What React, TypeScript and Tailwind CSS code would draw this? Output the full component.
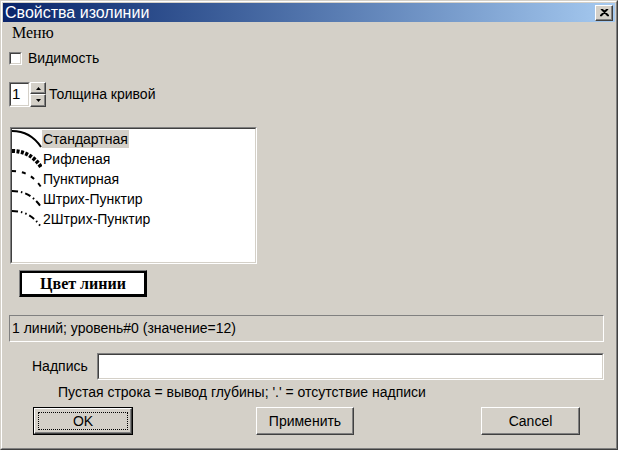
import React from 'react';

const sans = { fontFamily: '"Liberation Sans", Arial, sans-serif' };

// Стили линий для списка
const lineStyles = [
  { name: 'Стандартная', dash: '', width: 2 },
  { name: 'Рифленая', dash: '3 1.5', width: 4 },
  { name: 'Пунктирная', dash: '4 6', width: 2 },
  { name: 'Штрих-Пунктир', dash: '6 3 1.5 3', width: 2 },
  { name: '2Штрих-Пунктир', dash: '6 3 1.5 3 1.5 3', width: 2 },
];

const CurveIcon: React.FC<{ dash: string; width: number }> = ({ dash, width }) => (
  <svg width="30" height="20" viewBox="0 0 30 20" className="shrink-0">
    <path
      d="M0 2 C 11 2, 21 6, 29 18"
      fill="none"
      stroke="#000"
      strokeWidth={width}
      strokeDasharray={dash || undefined}
    />
  </svg>
);

const raised =
  'border border-t-white border-l-white border-r-[#404040] border-b-[#404040] shadow-[inset_-1px_-1px_#808080] bg-[#d4d0c8]';
const sunken =
  'border border-t-[#808080] border-l-[#808080] border-r-white border-b-white';

const App: React.FC = () => {
  return (
    <div className="w-[618px] h-[450px] bg-[#d4d0c8] text-[14px] text-black" style={sans}>
      <div className="w-full h-full border border-t-[#d4d0c8] border-l-[#d4d0c8] border-r-[#404040] border-b-[#404040]">
        <div className="w-full h-full border border-t-white border-l-white border-r-[#808080] border-b-[#808080] p-[1px] flex flex-col">
          {/* Заголовок окна */}
          <div className="h-[19px] flex items-center bg-gradient-to-r from-[#0a246a] to-[#a6caf0] pl-[2px] pr-[2px]">
            <span className="text-white text-[16px] leading-[19px] flex-1">Свойства изолинии</span>
            <div className={`${raised} w-[18px] h-[16px] flex items-center justify-center`}>
              <svg width="9" height="8" viewBox="0 0 9 8">
                <path d="M1 0 L8 7 M8 0 L1 7 M2 0 L9 7 M7 0 L0 7" stroke="#000" strokeWidth="1.3" fill="none" />
              </svg>
            </div>
          </div>

          {/* Меню */}
          <div className="ml-[9px] mt-[3px] h-[16px] leading-[16px] text-[16px]" style={{ fontFamily: '"Liberation Serif", serif' }}>
            Меню
          </div>

          {/* Видимость */}
          <div className="ml-[6px] mt-[9px] h-[16px] flex items-center gap-[6px]">
            <div className={`${sunken} w-[13px] h-[13px]`}>
              <div className="w-full h-full border border-t-[#404040] border-l-[#404040] border-r-[#d4d0c8] border-b-[#d4d0c8] bg-white" />
            </div>
            <span>Видимость</span>
          </div>

          {/* Толщина кривой */}
          <div className="ml-[6px] mt-[16px] h-[25px] flex items-center">
            <div className={`${sunken} w-[21px] h-[25px]`}>
              <div className="w-full h-full border border-t-[#404040] border-l-[#404040] border-r-[#d4d0c8] border-b-[#d4d0c8] bg-white pl-[1px] leading-[20px] text-[15px]">
                1
              </div>
            </div>
            <div className="w-[16px] h-[25px] flex flex-col">
              <div className={`${raised} h-[12px] flex items-center justify-center`}>
                <svg width="5" height="3" viewBox="0 0 5 3"><path d="M2.5 0 L5 3 L0 3 Z" fill="#000" /></svg>
              </div>
              <div className={`${raised} h-[13px] flex items-center justify-center`}>
                <svg width="5" height="3" viewBox="0 0 5 3"><path d="M0 0 L5 0 L2.5 3 Z" fill="#000" /></svg>
              </div>
            </div>
            <span className="ml-[3px]">Толщина кривой</span>
          </div>

          {/* Список стилей линии */}
          <div className={`${sunken} ml-[7px] mt-[20px] w-[247px] h-[137px]`}>
            <div className="w-full h-full border border-t-[#404040] border-l-[#404040] border-r-[#d4d0c8] border-b-[#d4d0c8] bg-white flex flex-col">
              {lineStyles.map((s, i) => (
                <div key={s.name} className="h-[20px] flex items-center">
                  <CurveIcon dash={s.dash} width={s.width} />
                  <span className={`px-[1px] h-[18px] leading-[18px] ${i === 0 ? 'bg-[#d4d0c8]' : ''}`}>{s.name}</span>
                </div>
              ))}
            </div>
          </div>

          {/* Цвет линии */}
          <div className="ml-[16px] mt-[6px] w-[128px] h-[27px] border border-t-[#808080] border-l-[#808080] border-r-black border-b-black">
            <div className="w-full h-full border-2 border-t-black border-l-black border-r-black border-b-black bg-white flex items-center justify-center">
              <span className="font-bold text-[16px]" style={{ fontFamily: '"Liberation Serif", serif' }}>Цвет линии</span>
            </div>
          </div>

          {/* Строка состояния */}
          <div className={`${sunken} ml-[6px] mt-[18px] w-[595px] h-[27px] flex items-center pl-[2px]`}>
            1 линий; уровень#0 (значение=12)
          </div>

          {/* Надпись */}
          <div className="mt-[11px] h-[27px] flex items-center">
            <span className="ml-[29px] w-[65px]">Надпись</span>
            <div className={`${sunken} w-[507px] h-[27px]`}>
              <div className="w-full h-full border border-t-[#404040] border-l-[#404040] border-r-[#d4d0c8] border-b-[#d4d0c8] bg-white" />
            </div>
          </div>

          <div className="ml-[55px] mt-[5px] h-[14px] leading-[14px]">
            Пустая строка = вывод глубины; '.' = отсутствие надписи
          </div>

          {/* Кнопки */}
          <div className="mt-[8px] h-[28px] flex">
            <div className="ml-[30px] w-[100px] h-[28px] border border-black">
              <div className={`${raised} w-full h-full p-[3px]`}>
                <div className="w-full h-full border border-dotted border-black flex items-center justify-center">OK</div>
              </div>
            </div>
            <div className={`${raised} ml-[123px] w-[98px] h-[28px] flex items-center justify-center`}>Применить</div>
            <div className={`${raised} ml-[127px] w-[99px] h-[28px] flex items-center justify-center`}>Cancel</div>
          </div>
        </div>
      </div>
    </div>
  );
};

export default App;
